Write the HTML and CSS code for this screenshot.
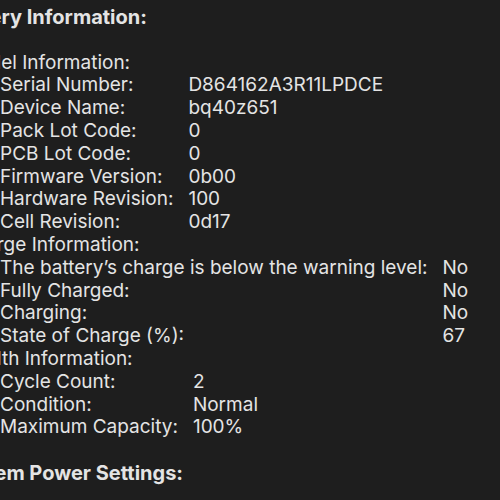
FILE: index.html
```html
<!DOCTYPE html>
<html lang="en">
<head>
<meta charset="utf-8">
<title>Battery Information</title>
<link rel="stylesheet" href="styles.css">
</head>
<body>
<div class="report">
  <h1 class="title">Battery Information:</h1>
  <div class="blank"></div>
  <section class="group">
    <h2 class="group-title">Model Information:</h2>
    <dl class="props">
      <dt>Serial Number:</dt><dd>D864162A3R11LPDCE</dd>
      <dt>Device Name:</dt><dd>bq40z651</dd>
      <dt>Pack Lot Code:</dt><dd>0</dd>
      <dt>PCB Lot Code:</dt><dd>0</dd>
      <dt>Firmware Version:</dt><dd>0b00</dd>
      <dt>Hardware Revision:</dt><dd>100</dd>
      <dt>Cell Revision:</dt><dd>0d17</dd>
    </dl>
  </section>
  <section class="group">
    <h2 class="group-title">Charge Information:</h2>
    <dl class="props">
      <dt>The battery’s charge is below the warning level:</dt><dd>No</dd>
      <dt>Fully Charged:</dt><dd>No</dd>
      <dt>Charging:</dt><dd>No</dd>
      <dt>State of Charge (%):</dt><dd>67</dd>
    </dl>
  </section>
  <section class="group">
    <h2 class="group-title">Health Information:</h2>
    <dl class="props">
      <dt>Cycle Count:</dt><dd>2</dd>
      <dt>Condition:</dt><dd>Normal</dd>
      <dt>Maximum Capacity:</dt><dd>100%</dd>
    </dl>
  </section>
  <div class="blank"></div>
  <h1 class="title">System Power Settings:</h1>
</div>
</body>
</html>
```
FILE: styles.css
```css
html, body {
  margin: 0;
  padding: 0;
  background: #1e1e1e;
  overflow: hidden;
}
body {
  width: 500px;
  height: 500px;
  color: #e4e4e4;
  font-family: Inter, "Noto Sans", sans-serif;
  font-size: 19px;
  line-height: 22.8px;
}
.report {
  padding-top: 6px;
  margin-left: -42px;
  white-space: nowrap;
}
.title {
  margin: 0 0 0 -7px;
  font-size: 20px;
  font-weight: 700;
  line-height: 22.8px;
}
.blank {
  height: 22.8px;
}
.group-title {
  margin: 0 0 0 3px;
  font-size: 19px;
  font-weight: 400;
  line-height: 22.8px;
}
.props {
  display: grid;
  grid-template-columns: max-content max-content;
  column-gap: 15px;
  margin: 0 0 0 42px;
}
.props dt, .props dd {
  margin: 0;
}
```
